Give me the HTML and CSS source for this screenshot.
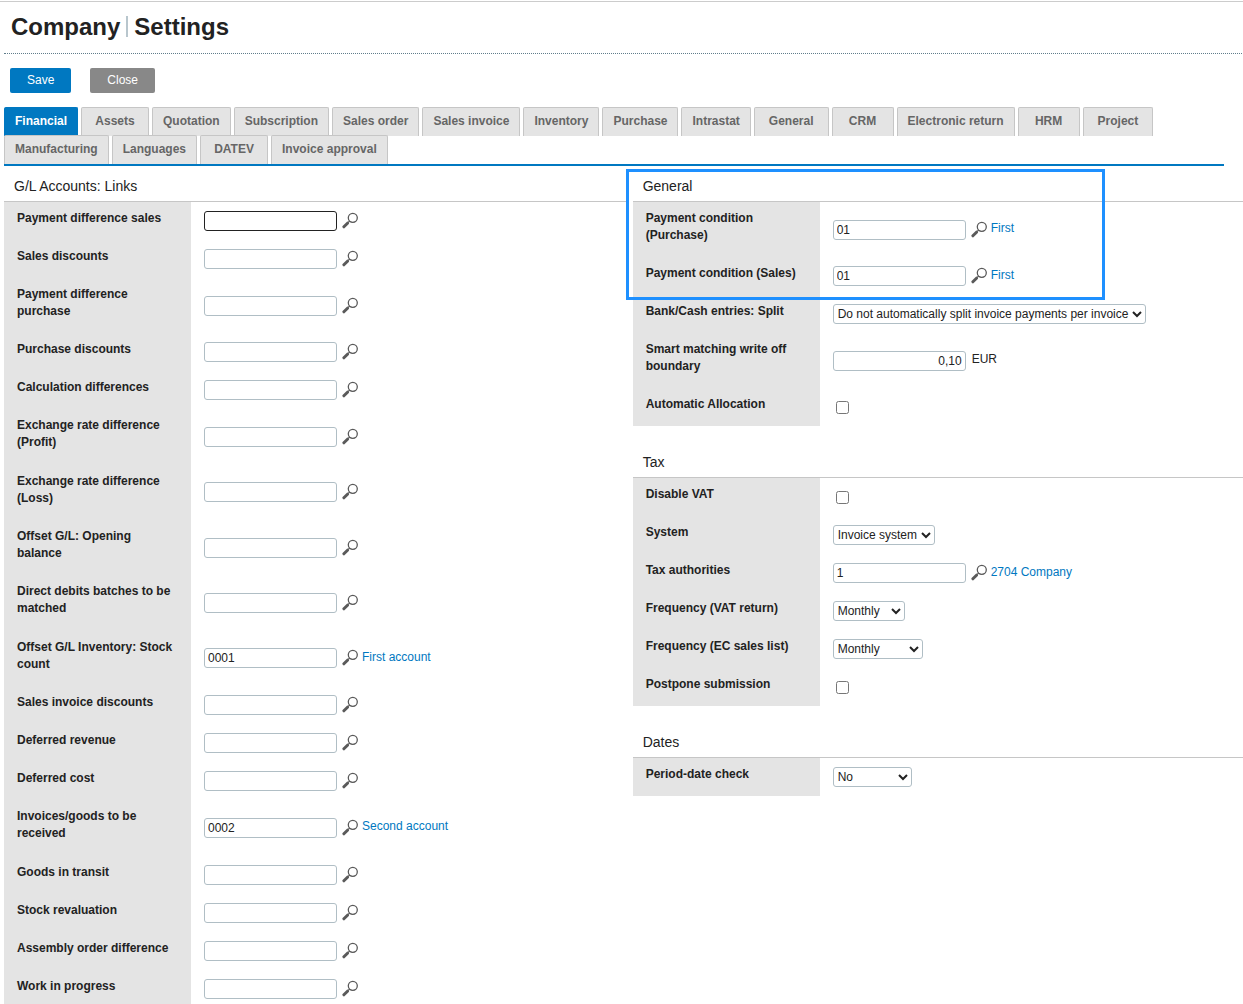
FILE: index.html
```html
<!DOCTYPE html>
<html lang="en">
<head>
    <meta charset="UTF-8">
    <meta name="viewport" content="width=device-width, initial-scale=1.0">
    <title>Company | Settings</title>
    <link rel="stylesheet" href="styles.css">
</head>
<body>
    <!-- shared icons -->
    <svg class="sprite" aria-hidden="true">
        <symbol id="icon-lookup" viewBox="0 0 16 17">
            <circle cx="10.8" cy="5.8" r="4.5" fill="none" stroke="#5a5a5a" stroke-width="1.3"/>
            <path d="M7.8 8.9 L6.2 10.5" stroke="#5a5a5a" stroke-width="1.2"/>
            <path d="M5.5 11.2 L1.9 14.8" stroke="#5a5a5a" stroke-width="3" stroke-linecap="round"/>
        </symbol>
    </svg>

    <header class="page-header">
        <h1>Company<span class="divider"></span>Settings</h1>
    </header>

    <form id="settingsForm">
        <div class="actions">
            <button type="submit" class="btn btn-primary">Save</button>
            <button type="button" class="btn btn-secondary">Close</button>
        </div>

        <nav class="tabs">
            <a href="#financial" class="tab active">Financial</a>
            <a href="#assets" class="tab">Assets</a>
            <a href="#quotation" class="tab">Quotation</a>
            <a href="#subscription" class="tab">Subscription</a>
            <a href="#salesorder" class="tab">Sales order</a>
            <a href="#salesinvoice" class="tab">Sales invoice</a>
            <a href="#inventory" class="tab">Inventory</a>
            <a href="#purchase" class="tab">Purchase</a>
            <a href="#intrastat" class="tab">Intrastat</a>
            <a href="#general" class="tab tab-short">General</a>
            <a href="#crm" class="tab tab-abbr">CRM</a>
            <a href="#electronicreturn" class="tab">Electronic return</a>
            <a href="#hrm" class="tab tab-abbr">HRM</a>
            <a href="#project" class="tab tab-short">Project</a>
            <a href="#manufacturing" class="tab">Manufacturing</a>
            <a href="#languages" class="tab">Languages</a>
            <a href="#datev" class="tab">DATEV</a>
            <a href="#invoiceapproval" class="tab">Invoice approval</a>
        </nav>

        <main class="columns">
            <div class="column">
                <section class="section">
                    <h2>G/L Accounts: Links</h2>
                    <div class="field-group">
                        <div class="field">
                            <label for="paymentDiffSales">Payment difference sales</label>
                            <div class="value">
                                <input type="text" id="paymentDiffSales" class="current">
                                <button type="button" class="lookup" aria-label="Search"><svg><use href="#icon-lookup"/></svg></button>
                            </div>
                        </div>
                        <div class="field">
                            <label for="salesDiscounts">Sales discounts</label>
                            <div class="value">
                                <input type="text" id="salesDiscounts">
                                <button type="button" class="lookup" aria-label="Search"><svg><use href="#icon-lookup"/></svg></button>
                            </div>
                        </div>
                        <div class="field">
                            <label for="paymentDiffPurchase">Payment difference purchase</label>
                            <div class="value">
                                <input type="text" id="paymentDiffPurchase">
                                <button type="button" class="lookup" aria-label="Search"><svg><use href="#icon-lookup"/></svg></button>
                            </div>
                        </div>
                        <div class="field">
                            <label for="purchaseDiscounts">Purchase discounts</label>
                            <div class="value">
                                <input type="text" id="purchaseDiscounts">
                                <button type="button" class="lookup" aria-label="Search"><svg><use href="#icon-lookup"/></svg></button>
                            </div>
                        </div>
                        <div class="field">
                            <label for="calculationDiff">Calculation differences</label>
                            <div class="value">
                                <input type="text" id="calculationDiff">
                                <button type="button" class="lookup" aria-label="Search"><svg><use href="#icon-lookup"/></svg></button>
                            </div>
                        </div>
                        <div class="field">
                            <label for="exchangeProfit">Exchange rate difference (Profit)</label>
                            <div class="value">
                                <input type="text" id="exchangeProfit">
                                <button type="button" class="lookup" aria-label="Search"><svg><use href="#icon-lookup"/></svg></button>
                            </div>
                        </div>
                    </div>
                    <div class="field-group">
                        <div class="field">
                            <label for="exchangeLoss">Exchange rate difference (Loss)</label>
                            <div class="value">
                                <input type="text" id="exchangeLoss">
                                <button type="button" class="lookup" aria-label="Search"><svg><use href="#icon-lookup"/></svg></button>
                            </div>
                        </div>
                        <div class="field">
                            <label for="openingBalance">Offset G/L: Opening balance</label>
                            <div class="value">
                                <input type="text" id="openingBalance">
                                <button type="button" class="lookup" aria-label="Search"><svg><use href="#icon-lookup"/></svg></button>
                            </div>
                        </div>
                        <div class="field">
                            <label for="directDebits">Direct debits batches to be matched</label>
                            <div class="value">
                                <input type="text" id="directDebits">
                                <button type="button" class="lookup" aria-label="Search"><svg><use href="#icon-lookup"/></svg></button>
                            </div>
                        </div>
                    </div>
                    <div class="field-group">
                        <div class="field">
                            <label for="stockCount">Offset G/L Inventory: Stock count</label>
                            <div class="value">
                                <input type="text" id="stockCount" value="0001">
                                <button type="button" class="lookup" aria-label="Search"><svg><use href="#icon-lookup"/></svg></button>
                                <a href="#account-0001">First account</a>
                            </div>
                        </div>
                        <div class="field">
                            <label for="salesInvoiceDiscounts">Sales invoice discounts</label>
                            <div class="value">
                                <input type="text" id="salesInvoiceDiscounts">
                                <button type="button" class="lookup" aria-label="Search"><svg><use href="#icon-lookup"/></svg></button>
                            </div>
                        </div>
                        <div class="field">
                            <label for="deferredRevenue">Deferred revenue</label>
                            <div class="value">
                                <input type="text" id="deferredRevenue">
                                <button type="button" class="lookup" aria-label="Search"><svg><use href="#icon-lookup"/></svg></button>
                            </div>
                        </div>
                        <div class="field">
                            <label for="deferredCost">Deferred cost</label>
                            <div class="value">
                                <input type="text" id="deferredCost">
                                <button type="button" class="lookup" aria-label="Search"><svg><use href="#icon-lookup"/></svg></button>
                            </div>
                        </div>
                        <div class="field">
                            <label for="toBeReceived">Invoices/goods to be received</label>
                            <div class="value">
                                <input type="text" id="toBeReceived" value="0002">
                                <button type="button" class="lookup" aria-label="Search"><svg><use href="#icon-lookup"/></svg></button>
                                <a href="#account-0002">Second account</a>
                            </div>
                        </div>
                    </div>
                    <div class="field-group">
                        <div class="field">
                            <label for="goodsInTransit">Goods in transit</label>
                            <div class="value">
                                <input type="text" id="goodsInTransit">
                                <button type="button" class="lookup" aria-label="Search"><svg><use href="#icon-lookup"/></svg></button>
                            </div>
                        </div>
                        <div class="field">
                            <label for="stockRevaluation">Stock revaluation</label>
                            <div class="value">
                                <input type="text" id="stockRevaluation">
                                <button type="button" class="lookup" aria-label="Search"><svg><use href="#icon-lookup"/></svg></button>
                            </div>
                        </div>
                        <div class="field">
                            <label for="assemblyDiff">Assembly order difference</label>
                            <div class="value">
                                <input type="text" id="assemblyDiff">
                                <button type="button" class="lookup" aria-label="Search"><svg><use href="#icon-lookup"/></svg></button>
                            </div>
                        </div>
                        <div class="field">
                            <label for="workInProgress">Work in progress</label>
                            <div class="value">
                                <input type="text" id="workInProgress">
                                <button type="button" class="lookup" aria-label="Search"><svg><use href="#icon-lookup"/></svg></button>
                            </div>
                        </div>
                    </div>
                </section>
            </div>

            <div class="column">
                <!-- marks the payment conditions -->
                <div class="highlight"></div>

                <section class="section">
                    <h2>General</h2>
                    <div class="field">
                        <label for="conditionPurchase">Payment condition (Purchase)</label>
                        <div class="value">
                            <input type="text" id="conditionPurchase" value="01">
                            <button type="button" class="lookup" aria-label="Search"><svg><use href="#icon-lookup"/></svg></button>
                            <a href="#condition-01">First</a>
                        </div>
                    </div>
                    <div class="field">
                        <label for="conditionSales">Payment condition (Sales)</label>
                        <div class="value">
                            <input type="text" id="conditionSales" value="01">
                            <button type="button" class="lookup" aria-label="Search"><svg><use href="#icon-lookup"/></svg></button>
                            <a href="#condition-01">First</a>
                        </div>
                    </div>
                    <div class="field">
                        <label for="entriesSplit">Bank/Cash entries: Split</label>
                        <div class="value">
                            <select id="entriesSplit" class="select-split">
                                <option>Do not automatically split invoice payments per invoice</option>
                            </select>
                        </div>
                    </div>
                    <div class="field">
                        <label for="writeOff">Smart matching write off boundary</label>
                        <div class="value">
                            <input type="text" id="writeOff" class="amount" value="0,10">
                            <span class="currency">EUR</span>
                        </div>
                    </div>
                    <div class="field">
                        <label for="autoAllocation">Automatic Allocation</label>
                        <div class="value">
                            <input type="checkbox" id="autoAllocation">
                        </div>
                    </div>
                </section>

                <section class="section">
                    <h2>Tax</h2>
                    <div class="field">
                        <label for="disableVat">Disable VAT</label>
                        <div class="value">
                            <input type="checkbox" id="disableVat">
                        </div>
                    </div>
                    <div class="field">
                        <label for="taxSystem">System</label>
                        <div class="value">
                            <select id="taxSystem" class="select-system">
                                <option>Invoice system</option>
                            </select>
                        </div>
                    </div>
                    <div class="field">
                        <label for="taxAuthorities">Tax authorities</label>
                        <div class="value">
                            <input type="text" id="taxAuthorities" value="1">
                            <button type="button" class="lookup" aria-label="Search"><svg><use href="#icon-lookup"/></svg></button>
                            <a href="#company-2704">2704 Company</a>
                        </div>
                    </div>
                    <div class="field">
                        <label for="vatFrequency">Frequency (VAT return)</label>
                        <div class="value">
                            <select id="vatFrequency" class="select-vat">
                                <option>Monthly</option>
                            </select>
                        </div>
                    </div>
                    <div class="field">
                        <label for="ecFrequency">Frequency (EC sales list)</label>
                        <div class="value">
                            <select id="ecFrequency" class="select-ec">
                                <option>Monthly</option>
                            </select>
                        </div>
                    </div>
                    <div class="field">
                        <label for="postpone">Postpone submission</label>
                        <div class="value">
                            <input type="checkbox" id="postpone">
                        </div>
                    </div>
                </section>

                <section class="section">
                    <h2>Dates</h2>
                    <div class="field">
                        <label for="periodCheck">Period-date check</label>
                        <div class="value">
                            <select id="periodCheck" class="select-period">
                                <option>No</option>
                            </select>
                        </div>
                    </div>
                </section>
            </div>
        </main>
    </form>
</body>
</html>
```
FILE: styles.css
```css
* {
    box-sizing: border-box;
    margin: 0;
    padding: 0;
}

html {
    scrollbar-width: none;
}

body {
    background-color: #fff;
    color: #222;
    font-family: Arial, "Liberation Sans", sans-serif;
    font-size: 12px;
    line-height: 17px;
    padding: 1px 0 0 4px;
}

a {
    color: #0078c1;
    text-decoration: none;
}

.sprite {
    position: absolute;
    width: 0;
    height: 0;
}

/* Header */
.page-header {
    margin-left: -4px;
    padding: 0 1px 0 4px;
    border-top: 1px solid #ccc;
}

.page-header h1 {
    display: flex;
    align-items: center;
    height: 52px;
    padding: 0 7px 2px;
    border-bottom: 1px dotted #607d8b;
    font-size: 24px;
    line-height: 28px;
    font-weight: bold;
}

.divider {
    width: 2px;
    height: 21px;
    margin: 0 6px;
    background-color: #b8c6cd;
}

/* Save and close */
.actions {
    display: flex;
    gap: 19px;
    padding: 14px 6px;
}

.btn {
    height: 25px;
    padding: 0 17px 2px;
    border: none;
    border-radius: 2px;
    color: #fff;
    font-family: inherit;
    font-size: 12px;
    cursor: pointer;
}

.btn-primary {
    background-color: #0078c1;
}

.btn-secondary {
    background-color: #888;
}

/* Tabs */
.tabs {
    display: flex;
    flex-wrap: wrap;
    column-gap: 3px;
    margin-right: 19px;
    padding-bottom: 1px;
    border-bottom: 2px solid #0078c1;
}

/* the rows overlap by 1px so the last one rests on the line */
.tab {
    height: 29px;
    min-width: 68px;
    margin-bottom: -1px;
    padding: 5px 10px;
    border: 1px solid #c6c6c6;
    border-bottom: none;
    border-radius: 2px 2px 0 0;
    background-color: #e4e4e4;
    color: #666;
    font-weight: bold;
    text-align: center;
}

.tab-short {
    padding: 5px 14px;
}

.tab-abbr {
    min-width: 62px;
}

.tab.active {
    border-color: #0078c1;
    background-color: #0078c1;
    color: #fff;
}

/* Sections */
.columns {
    display: grid;
    grid-template-columns: 101fr 99fr;
    column-gap: 6px;
}

.column {
    position: relative;
}

.section + .section {
    margin-top: 16px;
}

.section h2 {
    height: 36px;
    padding: 11px 10px 0;
    border-bottom: 1px solid #c6c6c6;
    font-size: 14px;
    line-height: 18px;
    font-weight: normal;
}

.field {
    display: grid;
    grid-template-columns: 187px 1fr;
}

.field label {
    padding: 8px 13px 13px;
    background-color: #e4e4e4;
    font-weight: bold;
}

.field-group + .field-group .field:first-child label {
    padding-top: 9px;
}

.value {
    display: flex;
    align-items: center;
    padding-left: 13px;
}

.value input[type="text"],
.value select {
    height: 20px;
    border: 1px solid #b0bec5;
    border-radius: 3px;
    background-color: #fff;
    color: #222;
    font-family: inherit;
    font-size: 12px;
}

.value input[type="text"] {
    width: 133px;
    padding: 0 3px;
}

.value input.current {
    border-color: #222;
}

.value input.amount {
    text-align: right;
}

.value input[type="checkbox"] {
    width: 13px;
    height: 13px;
    margin-left: 3px;
}

.value a {
    margin: 0 0 2px 3px;
}

.currency {
    margin: 0 0 2px 6px;
}

.lookup {
    width: 17px;
    height: 17px;
    margin: 0 0 1px 5px;
    border: none;
    background: none;
    cursor: pointer;
}

.lookup svg {
    display: block;
    width: 16px;
    height: 17px;
}

.select-split {
    width: 313px;
}

.select-system {
    width: 102px;
}

.select-vat {
    width: 72px;
}

.select-ec {
    width: 90px;
}

.select-period {
    width: 79px;
}

.highlight {
    position: absolute;
    top: 3px;
    left: -7px;
    width: 479px;
    height: 131px;
    border: 3px solid #1e90ff;
    pointer-events: none;
}
```
